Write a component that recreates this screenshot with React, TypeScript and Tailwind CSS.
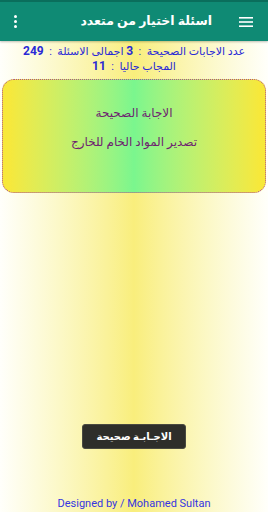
export default function App() {
  return (
    <div
      dir="rtl"
      className="relative flex min-h-[512px] w-[268px] flex-col overflow-hidden bg-gradient-to-r from-[#fffffb] via-[#f9ee7c] to-[#fffffb] font-['Roboto','DejaVu_Sans',sans-serif]"
    >
      <header className="flex h-[41px] items-center border-t-2 border-[#0a6e5c] bg-[#0f8a74] pr-[14px] pl-[14px] text-white shadow-[0_1px_2px_rgba(0,0,0,0.25)]">
        <svg width="16" height="12" viewBox="0 0 16 12" className="shrink-0">
          <rect x="1" y="1" width="14" height="1.6" fill="white" />
          <rect x="1" y="5.2" width="14" height="1.6" fill="white" />
          <rect x="1" y="9.4" width="14" height="1.6" fill="white" />
        </svg>
        <h1 className="mr-[26px] text-[12.5px] font-bold">اسئلة اختيار من متعدد</h1>
        <div className="mr-auto flex flex-col gap-[2px]">
          <span className="h-[3px] w-[3px] rounded-full bg-white" />
          <span className="h-[3px] w-[3px] rounded-full bg-white" />
          <span className="h-[3px] w-[3px] rounded-full bg-white" />
        </div>
      </header>

      <div className="mt-[3px] px-[10px] text-center text-[11px] leading-[15px] text-[#2a2ad6]">
        <p>
          عدد الاجابات الصحيحة &nbsp;:&nbsp; <b className="text-[12px]">3</b> اجمالى الاسئلة &nbsp;:&nbsp; <b className="text-[12px]">249</b>
        </p>
        <p>
          المجاب حاليا &nbsp;:&nbsp; <b className="text-[12px]">11</b>
        </p>
      </div>

      <div className="mx-[2px] mt-[5px] flex h-[114px] flex-col items-center gap-[13px] rounded-[12px] border border-dotted border-[#b0508c] bg-gradient-to-r from-[#f7e83a] from-[2%] via-[#7af68e] to-[#f7e83a] to-[98%] pt-[25px] text-[12px] leading-[16px] text-[#6e1f70]">
        <p>الاجابة الصحيحة</p>
        <p>تصدير المواد الخام للخارج</p>
      </div>

      <div className="flex-1" />

      <p dir="ltr" className="pb-[1px] text-center text-[11px] leading-[14px] text-[#3535e0]">
        Designed by / Mohamed Sultan
      </p>

      <div className="absolute top-[424px] left-[82px] flex h-[25px] w-[104px] items-center justify-center rounded-[3px] border border-[#4a4a40] bg-[#2e2e2a] text-[10px] font-bold text-white">
        الاجـابـة صحيحة
      </div>
    </div>
  )
}
